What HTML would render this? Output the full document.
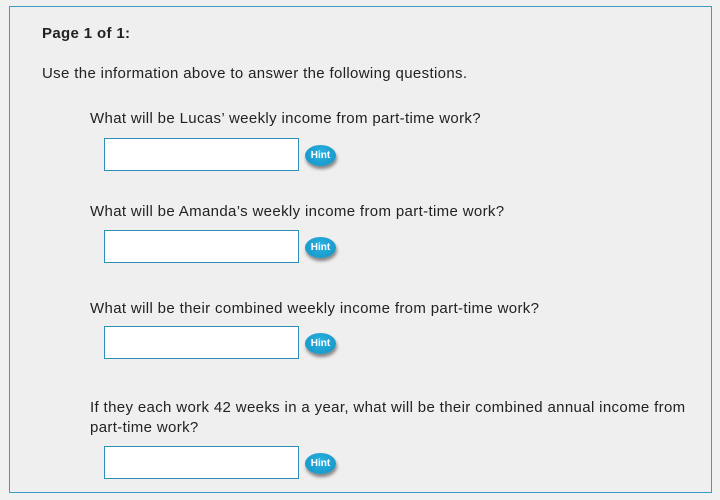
<!DOCTYPE html>
<html><head><style>
body{margin:0;width:720px;height:500px;background:#f0f0f0;font-family:"Liberation Sans",sans-serif;color:#222;position:relative;overflow:hidden}
.box{position:absolute;left:9px;top:6px;width:703px;height:487px;border:1px solid #3b9cc4;background:#efefef;box-sizing:border-box}
.t{position:absolute;font-size:15px;letter-spacing:0.35px;white-space:nowrap;line-height:20px}
.in{position:absolute;left:104px;width:193px;height:31px;border:1px solid #2e8fb8;background:#fff}
.h{position:absolute;left:305px;width:31px;height:21px;border-radius:50%;background:radial-gradient(ellipse at 50% 40%,#2bb3e0,#1290c4);box-shadow:1px 3px 3px rgba(0,0,0,.45);color:#fff;font-weight:bold;font-size:10px;text-align:center;line-height:21px}
</style></head><body>
<div class="box"></div>
<div class="t" style="left:42px;top:24px;font-weight:bold">Page 1 of 1:</div>
<div class="t" style="left:42px;top:64px">Use the information above to answer the following questions.</div>
<div class="t" style="left:90px;top:109px">What will be Lucas’ weekly income from part-time work?</div>
<div class="in" style="top:138px"></div><div class="h" style="top:145px">Hint</div>
<div class="t" style="left:90px;top:202px">What will be Amanda’s weekly income from part-time work?</div>
<div class="in" style="top:230px"></div><div class="h" style="top:237px">Hint</div>
<div class="t" style="left:90px;top:299px">What will be their combined weekly income from part-time work?</div>
<div class="in" style="top:326px"></div><div class="h" style="top:333px">Hint</div>
<div class="t" style="left:90px;top:398px">If they each work 42 weeks in a year, what will be their combined annual income from</div>
<div class="t" style="left:90px;top:418px">part-time work?</div>
<div class="in" style="top:446px"></div><div class="h" style="top:453px">Hint</div>
</body></html>
